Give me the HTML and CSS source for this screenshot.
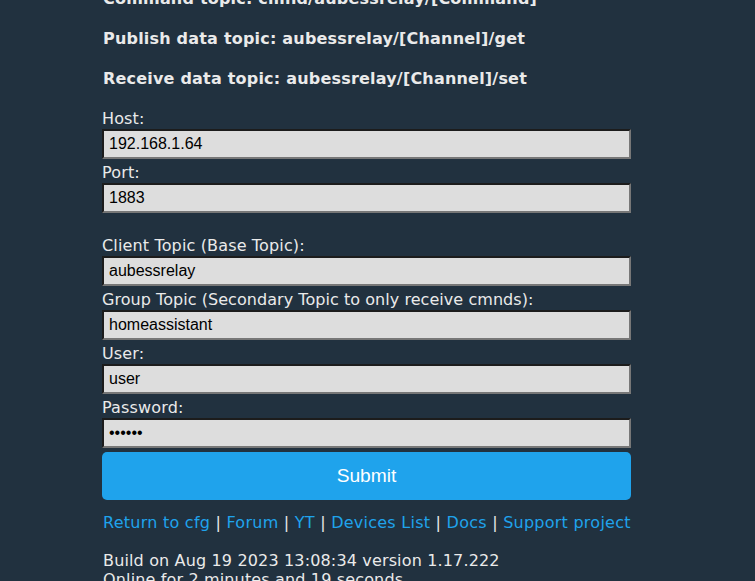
FILE: index.html
```html
<!DOCTYPE html>
<html>
<head>
<meta charset="utf-8">
<link rel="stylesheet" href="styles.css">
</head>
<body>
<div class="page">
  <div class="topic">Command topic: cmnd/aubessrelay/[Command]</div>
  <div class="topic">Publish data topic: aubessrelay/[Channel]/get</div>
  <div class="topic">Receive data topic: aubessrelay/[Channel]/set</div>
  <form class="form">
    <div class="field">
      <label class="label">Host:</label>
      <input class="input" type="text" value="192.168.1.64">
    </div>
    <div class="field">
      <label class="label">Port:</label>
      <input class="input" type="text" value="1883">
    </div>
    <div class="field spaced">
      <label class="label">Client Topic (Base Topic):</label>
      <input class="input" type="text" value="aubessrelay">
    </div>
    <div class="field">
      <label class="label tight">Group Topic (Secondary Topic to only receive cmnds):</label>
      <input class="input" type="text" value="homeassistant">
    </div>
    <div class="field">
      <label class="label">User:</label>
      <input class="input" type="text" value="user">
    </div>
    <div class="field">
      <label class="label">Password:</label>
      <input class="input" type="password" value="secret">
    </div>
    <button class="submit" type="button">Submit</button>
  </form>
  <div class="links">
    <a href="#">Return to cfg</a> | <a href="#">Forum</a> | <a href="#">YT</a> | <a href="#">Devices List</a> | <a href="#">Docs</a> | <a href="#">Support project</a>
  </div>
  <div class="status">
    <div>Build on Aug 19 2023 13:08:34 version 1.17.222</div>
    <div>Online for 2 minutes and 19 seconds</div>
  </div>
</div>
</body>
</html>
```

FILE: styles.css
```css
html, body {
  margin: 0;
  padding: 0;
  background: #21313f;
  height: 100%;
  overflow: hidden;
}
body {
  color: #eaeaea;
  font-family: "DejaVu Sans", sans-serif;
  font-size: 16px;
  line-height: 20px;
  letter-spacing: 0.15px;
}
.page {
  width: 529px;
  padding-left: 102px;
  margin-top: -11px;
}
.topic {
  font-weight: bold;
  margin-bottom: 20px;
  padding-left: 1px;
  white-space: nowrap;
  letter-spacing: 0.2px;
}
.form {
  display: flex;
  flex-direction: column;
  gap: 4px;
}
.field {
  display: flex;
  flex-direction: column;
}
.field.spaced {
  margin-top: 19px;
}
.label {
  display: block;
  height: 20px;
  line-height: 20px;
  white-space: nowrap;
}
.label.tight {
  letter-spacing: 0.05px;
}
.input {
  box-sizing: border-box;
  width: 100%;
  height: 30px;
  margin: 0;
  padding: 0 5px;
  background: #dddddd;
  color: #000;
  border-style: solid;
  border-width: 2px;
  border-color: #1c1c1c #777777 #777777 #1c1c1c;
  font-family: "Liberation Sans", Arial, sans-serif;
  font-size: 16px;
  letter-spacing: 0;
  outline: none;
}
.submit {
  box-sizing: border-box;
  width: 100%;
  height: 48px;
  margin: 0;
  border: 0;
  border-radius: 5px;
  background: #1fa3ec;
  color: #fff;
  font-family: "Liberation Sans", Arial, sans-serif;
  font-size: 19.2px;
  letter-spacing: 0;
  cursor: pointer;
}
.links {
  margin-top: 13px;
  padding-left: 1px;
  white-space: nowrap;
  letter-spacing: 0.25px;
}
.links a {
  color: #1fa3ec;
  text-decoration: none;
}
.status {
  margin-top: 18px;
  padding-left: 1px;
  line-height: 19px;
  white-space: nowrap;
}
```
